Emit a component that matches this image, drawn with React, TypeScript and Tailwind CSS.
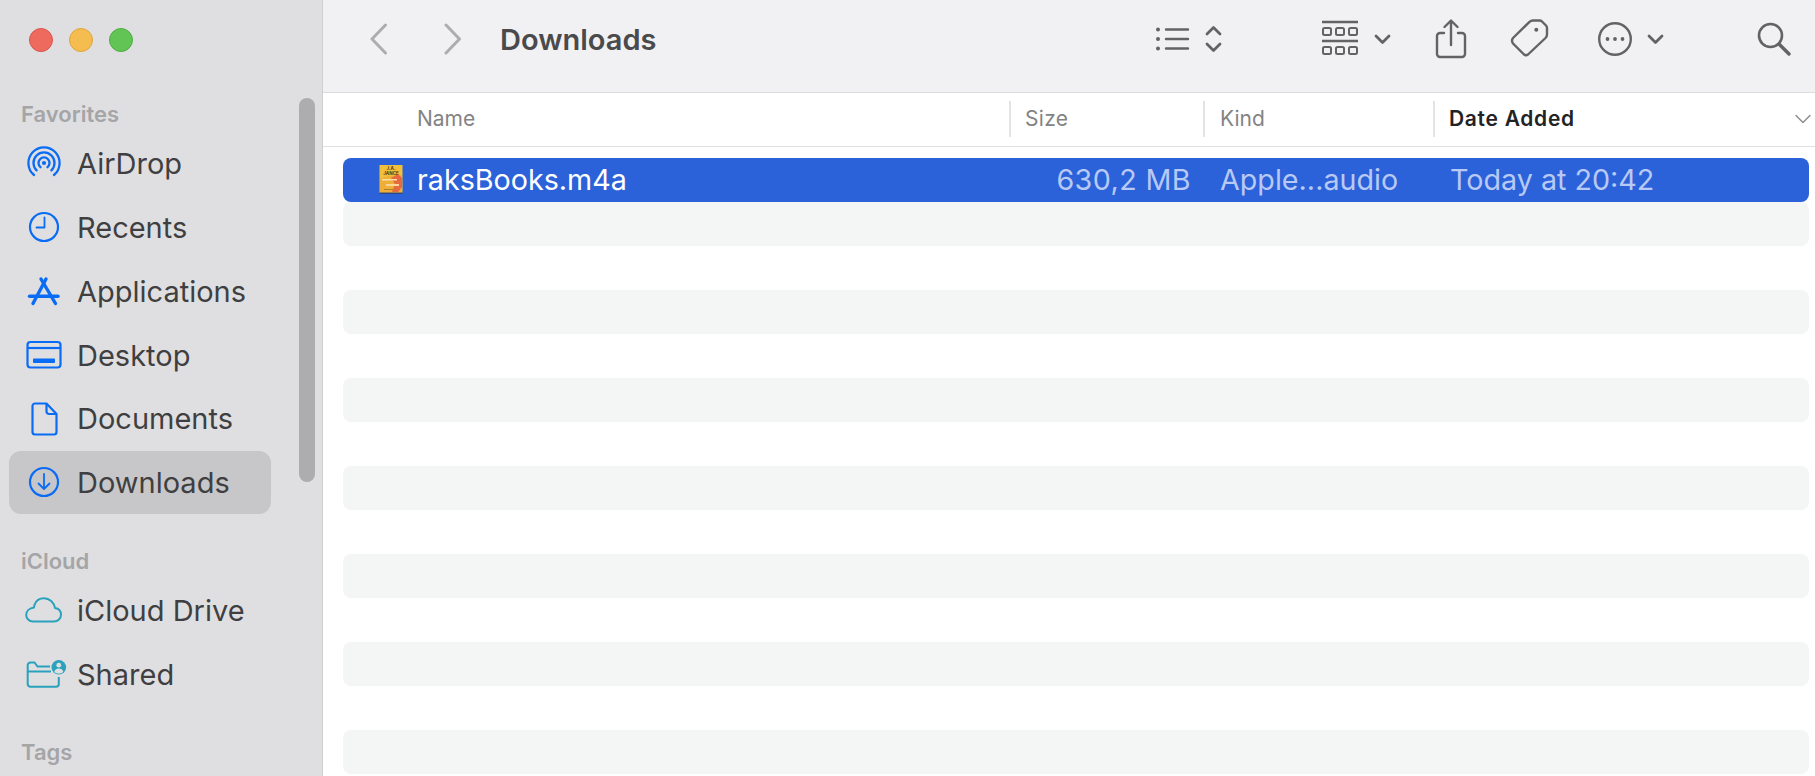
import { ReactNode } from "react";

const blue = "#0a6cf5";
const teal = "#2aa2bd";
const gray = "#636366";

const AirDropIcon = () => (
  <svg width="36" height="36" viewBox="0 0 36 36" fill="none" stroke={blue} strokeWidth="2.300" strokeLinecap="round">
    <circle cx="18" cy="18" r="2.100" fill={blue} stroke="none" />
    <path d="M14.500 22.200a5.500 5.500 0 1 1 7 0" />
    <path d="M10.600 25.400a10.500 10.500 0 1 1 14.800 0" />
    <path d="M8 30a15.600 15.600 0 1 1 20 0" />
  </svg>
);

const ClockIcon = () => (
  <svg width="36" height="36" viewBox="0 0 36 36" fill="none" stroke={blue} strokeWidth="2.200" strokeLinecap="round" strokeLinejoin="round">
    <circle cx="18" cy="18" r="14" />
    <path d="M18.500 8.500V18.500H10.500" strokeWidth="1.800" />
  </svg>
);

const AppsIcon = () => (
  <svg width="36" height="36" viewBox="0 0 36 36" fill="none" stroke={blue} strokeWidth="3.400" strokeLinecap="round">
    <path d="M20 6L7 30.500" />
    <path d="M15 6L29.500 30.500" />
    <path d="M3.500 23.300H32" />
  </svg>
);

const DesktopIcon = () => (
  <svg width="36" height="30" viewBox="0 0 36 30" fill="none" stroke={blue} strokeWidth="2.200">
    <rect x="1.500" y="2" width="33" height="25.500" rx="3" />
    <path d="M2 8H34" />
    <rect x="7" y="18.500" width="22" height="4.500" rx="0.800" fill={blue} stroke="none" />
  </svg>
);

const DocumentIcon = () => (
  <svg width="36" height="36" viewBox="0 0 36 36" fill="none" stroke={blue} strokeWidth="2.200" strokeLinejoin="round">
    <path d="M9 2.500H20.500L30.500 13V31a2.500 2.500 0 0 1-2.500 2.500H9A2.500 2.500 0 0 1 6.500 31V5A2.500 2.500 0 0 1 9 2.500Z" />
    <path d="M20.500 2.800V10.500a2.500 2.500 0 0 0 2.500 2.500H30" />
  </svg>
);

const DownloadIcon = () => (
  <svg width="36" height="36" viewBox="0 0 36 36" fill="none" stroke={blue} strokeWidth="2.200" strokeLinecap="round" strokeLinejoin="round">
    <circle cx="18" cy="18" r="14" />
    <path d="M18 10V25M12.500 19.500L18 25L23.500 19.500" strokeWidth="1.800" />
  </svg>
);

const CloudIcon = () => (
  <svg width="38" height="26" viewBox="0 0 38 26" fill="none" stroke={teal} strokeWidth="2" strokeLinejoin="round">
    <path d="M8 24.500H29C33 24.500 36 21.500 36 17.800C36 14 33.500 11.500 30 11C29 5.500 24.500 1.200 19 1.200C14.500 1.200 11 3.500 9.500 7.800C9.200 9 9 9.800 9 10.500C4.500 11 1.200 14 1.200 18C1.200 21.500 4 24.500 8 24.500Z" />
  </svg>
);

const SharedIcon = () => (
  <svg width="40" height="28" viewBox="0 0 40 28" fill="none" stroke={teal} strokeWidth="2" className="overflow-visible">
    <path d="M26 6.500H13.500L10.500 2.500H6.500A2.800 2.800 0 0 0 3.700 5.300V24A2.800 2.800 0 0 0 6.500 26.800H32A2.800 2.800 0 0 0 34.800 24V17" />
    <path d="M4 11.500H27" />
    <circle cx="34.800" cy="7.300" r="7.300" fill={teal} stroke="none" />
    <circle cx="34.800" cy="5.200" r="2.400" fill="#dfdfe1" stroke="none" />
    <path d="M30.300 12C30.800 9.500 32.800 8.600 34.800 8.600S38.800 9.500 39.300 12C36.500 14 33 14 30.300 12Z" fill="#dfdfe1" stroke="none" />
  </svg>
);

const CoverIcon = () => (
  <svg width="24" height="29" viewBox="0 0 24 29" className="shrink-0">
    <rect x="0.500" y="0" width="23" height="28" fill="#f2bf3a" />
    <rect x="0.500" y="27.500" width="23" height="1.500" fill="#34457f" />
    <path d="M1 14L9 11L23 10V27H1Z" fill="#efae35" />
    <path d="M12 13L19 9L23 13V22L19 27L13 27L16 19Z" fill="#e8683f" />
    <text x="12" y="5" textAnchor="middle" fontSize="4.500" fontWeight="700" fill="#4b3a1e">J.A.</text>
    <text x="12" y="10" textAnchor="middle" fontSize="4.500" fontWeight="700" fill="#4b3a1e">JANCE</text>
    <rect x="3" y="14" width="15" height="1.500" fill="#f9dfa6" />
    <rect x="7" y="19" width="13" height="2" fill="#f8d59a" />
    <rect x="5" y="24" width="12" height="1" fill="#b77b34" />
  </svg>
);

const Chevron = ({ className }: { className?: string }) => (
  <svg width="17" height="11" viewBox="0 0 17 11" fill="none" stroke={gray} strokeWidth="2.800" strokeLinecap="round" strokeLinejoin="round" className={className}>
    <path d="M2 2L8.500 8.500L15 2" />
  </svg>
);

const SidebarLabel = ({ children }: { children: ReactNode }) => (
  <div className="h-[35px] pl-[21px] pt-[1px] flex items-center text-[22px] font-semibold text-[#a5a5a8]">{children}</div>
);

const SidebarItem = ({ icon, label, active }: { icon: ReactNode; label: string; active?: boolean }) => (
  <div className={"h-[63.800px] ml-[9px] w-[262px] rounded-[12px] flex items-center " + (active ? "bg-[#c7c7c9]" : "")}>
    <div className="w-[68px] pl-[1px] flex justify-center shrink-0">{icon}</div>
    <span className="pt-[1px] text-[29px] text-[#3f3f41]">{label}</span>
  </div>
);

const Sidebar = () => (
  <aside className="relative w-[322px] shrink-0 h-full bg-[#dfdfe1] border-r border-[#cfcfd1] box-content overflow-hidden">
    <div className="h-[96.600px] pl-[29px] pt-[28px] flex gap-[16px] items-start">
      <span className="w-[24px] h-[24px] rounded-full bg-[#ee6a5f] border border-[#d9574d]" />
      <span className="w-[24px] h-[24px] rounded-full bg-[#f5bd4f] border border-[#dfa63c]" />
      <span className="w-[24px] h-[24px] rounded-full bg-[#61c454] border border-[#52ad46]" />
    </div>
    <SidebarLabel>Favorites</SidebarLabel>
    <SidebarItem icon={<AirDropIcon />} label="AirDrop" />
    <SidebarItem icon={<ClockIcon />} label="Recents" />
    <SidebarItem icon={<AppsIcon />} label="Applications" />
    <SidebarItem icon={<DesktopIcon />} label="Desktop" />
    <SidebarItem icon={<DocumentIcon />} label="Documents" />
    <SidebarItem icon={<DownloadIcon />} label="Downloads" active />
    <div className="h-[29px]" />
    <SidebarLabel>iCloud</SidebarLabel>
    <SidebarItem icon={<CloudIcon />} label="iCloud Drive" />
    <SidebarItem icon={<SharedIcon />} label="Shared" />
    <div className="h-[29px]" />
    <SidebarLabel>Tags</SidebarLabel>
    {/* overlay scrollbar */}
    <div className="absolute left-[299px] top-[98px] w-[16px] h-[384px] rounded-full bg-[#adadaf]" />
  </aside>
);

const Toolbar = () => (
  <header className="h-[93px] shrink-0 bg-[#f1f1f3] border-b border-[#dcdcdc] flex items-center pb-[14px]">
    <svg width="20" height="32" viewBox="0 0 20 32" fill="none" stroke="#adadaf" strokeWidth="3" strokeLinecap="round" strokeLinejoin="round" className="ml-[46px]">
      <path d="M16.500 2L3 16L16.500 30" />
    </svg>
    <svg width="20" height="32" viewBox="0 0 20 32" fill="none" stroke="#adadaf" strokeWidth="3" strokeLinecap="round" strokeLinejoin="round" className="ml-[54px]">
      <path d="M3 2L16.500 16L3 30" />
    </svg>
    <h1 className="ml-[37px] pt-[1px] text-[29px] font-semibold text-[#4a4a4c]">Downloads</h1>

    <div className="ml-auto flex items-center">
      {/* list view */}
      <svg width="36" height="28" viewBox="0 0 36 28" fill="none" stroke={gray} strokeWidth="2.400" strokeLinecap="round" className="mr-[-1px]">
        <circle cx="3" cy="4.500" r="2" fill={gray} stroke="none" />
        <circle cx="3" cy="14" r="2" fill={gray} stroke="none" />
        <circle cx="3" cy="23.500" r="2" fill={gray} stroke="none" />
        <path d="M11 4.500H33M11 14H33M11 23.500H33" />
      </svg>
      <div className="ml-[15px] flex flex-col gap-[6px]">
        <Chevron className="rotate-180" />
        <Chevron />
      </div>
      {/* group */}
      <svg width="38" height="38" viewBox="0 0 38 38" fill="none" stroke={gray} strokeWidth="2" className="ml-[99px]">
        <path d="M1 2H37M1 21H37" strokeWidth="2.400" />
        <rect x="2" y="8" width="8" height="7" rx="1.500" />
        <rect x="15" y="8" width="8" height="7" rx="1.500" />
        <rect x="28" y="8" width="8" height="7" rx="1.500" />
        <rect x="2" y="27" width="8" height="7" rx="1.500" />
        <rect x="15" y="27" width="8" height="7" rx="1.500" />
        <rect x="28" y="27" width="8" height="7" rx="1.500" />
      </svg>
      <Chevron className="ml-[15px]" />
      {/* share */}
      <svg width="32" height="40" viewBox="0 0 32 40" fill="none" stroke={gray} strokeWidth="2.400" strokeLinecap="round" strokeLinejoin="round" className="ml-[44px]">
        <path d="M9 14H5a3 3 0 0 0-3 3V35a3 3 0 0 0 3 3H27a3 3 0 0 0 3-3V17a3 3 0 0 0-3-3H23" />
        <path d="M16 26V2M9.500 8L16 1.500L22.500 8" />
      </svg>
      {/* tag */}
      <svg width="40" height="40" viewBox="0 0 40 40" fill="none" stroke={gray} strokeWidth="2.400" strokeLinejoin="round" className="ml-[43px]">
        <path d="M3 19L19.500 2.800Q21 1.500 23 1.500H29.500Q31 1.500 32 2.500L36 6.500Q37 7.500 37 9V15.500Q37 17.500 35.500 19L18 35.500Q16 37 14 35.500L3 24.500Q1 21.500 3 19Z" />
        <circle cx="26.300" cy="10.800" r="2" fill={gray} stroke="none" />
      </svg>
      {/* more */}
      <svg width="36" height="36" viewBox="0 0 36 36" fill="none" stroke={gray} strokeWidth="2.400" className="ml-[47px]">
        <circle cx="18" cy="18" r="15.800" />
        <circle cx="10.500" cy="18" r="1.900" fill={gray} stroke="none" />
        <circle cx="18" cy="18" r="1.900" fill={gray} stroke="none" />
        <circle cx="25.500" cy="18" r="1.900" fill={gray} stroke="none" />
      </svg>
      <Chevron className="ml-[14px]" />
      {/* search */}
      <svg width="34" height="34" viewBox="0 0 34 34" fill="none" stroke={gray} strokeWidth="2.600" strokeLinecap="round" className="ml-[93px] mr-[24px]">
        <circle cx="13.500" cy="13.500" r="11.500" />
        <path d="M22 22L32 32" strokeWidth="3.400" />
      </svg>
    </div>
  </header>
);

const ColumnHeader = () => (
  <div className="h-[54px] shrink-0 pb-[2px] bg-white border-b border-[#e0e0e0] flex items-center text-[21px] text-[#838385]">
    <div className="w-[686px] pl-[94px]">Name</div>
    <div className="w-[194px] h-[36px] pl-[14px] border-l-2 border-[#e4e4e4] flex items-center tracking-[0.300px]">Size</div>
    <div className="w-[230px] h-[36px] pl-[15px] border-l-2 border-[#e4e4e4] flex items-center">Kind</div>
    <div className="flex-1 h-[36px] pl-[14px] border-l-2 border-[#e4e4e4] flex items-center font-semibold text-[#232325] tracking-[0.700px]">Date Added</div>
    <svg width="16" height="10" viewBox="0 0 16 10" fill="none" stroke="#8e8e90" strokeWidth="1.500" strokeLinecap="round" strokeLinejoin="round" className="mr-[4px]">
      <path d="M1 1.500L8 8.500L15 1.500" />
    </svg>
  </div>
);

const SelectedRow = () => (
  <div className="h-[44px] shrink-0 rounded-[8px] bg-[#2b62d9] flex items-center text-[28.700px]">
    <div className="w-[667px] pl-[36px] flex items-center text-white">
      <CoverIcon />
      <span className="ml-[14px]">raksBooks.m4a</span>
    </div>
    <div className="w-[181px] text-right text-[#b7c9f4] tracking-[0.400px]">630,2 MB</div>
    <div className="w-[230px] pl-[29px] whitespace-nowrap text-[#b7c9f4]">Apple...audio</div>
    <div className="flex-1 pl-[29px] text-[#b7c9f4]">Today at 20:42</div>
  </div>
);

// rows alternate white / faint grey below the selected one
const FileRows = () => (
  <div className="flex-1 min-h-0 overflow-hidden bg-white pl-[20px] pr-[6px] pt-[11px] flex flex-col">
    <SelectedRow />
    {[0, 1, 2, 3, 4, 5, 6, 7, 8, 9, 10, 11, 12].map((i) => (
      <div key={i} className={"h-[44px] shrink-0 rounded-[8px] " + (i % 2 === 0 ? "bg-[#f4f5f5]" : "bg-white")} />
    ))}
  </div>
);

export default function App() {
  return (
    <div className="w-[1815px] h-[776px] flex overflow-hidden bg-white font-['Inter',sans-serif]">
      <Sidebar />
      <main className="flex-1 min-w-0 flex flex-col">
        <Toolbar />
        <ColumnHeader />
        <FileRows />
      </main>
    </div>
  );
}
